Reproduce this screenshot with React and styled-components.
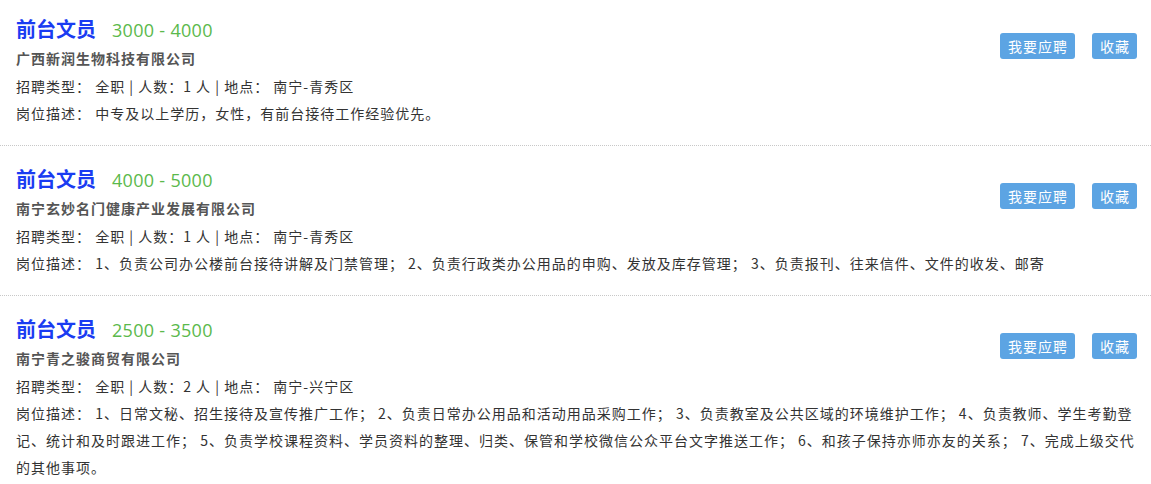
import React from 'react';
import styled, { createGlobalStyle } from 'styled-components';

const GlobalStyle = createGlobalStyle`
  body {
    margin: 0;
    background: #fff;
    font-family: "Noto Sans CJK SC", "Noto Sans", sans-serif;
    color: #333;
  }
`;

const List = styled.div`
  width: 1151px;
`;

const Job = styled.div`
  padding: 18px 14px 18px 16px;
  border-bottom: 1px dotted #c8c8c8;

  &:first-child {
    padding-top: 14px;
  }
`;

const Head = styled.div`
  display: flex;
  flex-direction: row;
  align-items: flex-start;
  justify-content: space-between;
`;

const TitleRow = styled.div`
  display: flex;
  flex-direction: row;
  align-items: baseline;
  gap: 16px;
  height: 30px;
  line-height: 30px;
`;

const Title = styled.span`
  font-size: 20px;
  font-weight: 700;
  color: #1a3cf2;
`;

const Salary = styled.span`
  font-family: "Open Sans", "Noto Sans", sans-serif;
  font-size: 18px;
  letter-spacing: 0.3px;
  color: #5bb94c;
`;

const Company = styled.div`
  font-size: 14px;
  font-weight: 700;
  letter-spacing: 1px;
  color: #555;
  line-height: 28px;
`;

const Line = styled.div`
  font-size: 14px;
  letter-spacing: 1px;
  color: #333;
  line-height: ${p => (p.$desc ? '27px' : '28px')};
`;

const Buttons = styled.div`
  display: flex;
  flex-direction: row;
  gap: 17px;
  margin-top: 19px;
`;

const Button = styled.button`
  height: 26px;
  padding: 0 7px 0 8px;
  border: none;
  border-radius: 3px;
  background: #5ca4e3;
  color: #fff;
  font-family: "Noto Sans CJK SC", sans-serif;
  font-size: 14px;
  letter-spacing: 1px;
  line-height: 26px;
  cursor: pointer;
`;

const jobs = [
  {
    title: '前台文员',
    salary: '3000 - 4000',
    company: '广西新润生物科技有限公司',
    count: 1,
    place: '南宁-青秀区',
    desc: '中专及以上学历，女性，有前台接待工作经验优先。',
  },
  {
    title: '前台文员',
    salary: '4000 - 5000',
    company: '南宁玄妙名门健康产业发展有限公司',
    count: 1,
    place: '南宁-青秀区',
    desc: '1、负责公司办公楼前台接待讲解及门禁管理； 2、负责行政类办公用品的申购、发放及库存管理； 3、负责报刊、往来信件、文件的收发、邮寄',
  },
  {
    title: '前台文员',
    salary: '2500 - 3500',
    company: '南宁青之骏商贸有限公司',
    count: 2,
    place: '南宁-兴宁区',
    desc: '1、日常文秘、招生接待及宣传推广工作； 2、负责日常办公用品和活动用品采购工作； 3、负责教室及公共区域的环境维护工作； 4、负责教师、学生考勤登记、统计和及时跟进工作； 5、负责学校课程资料、学员资料的整理、归类、保管和学校微信公众平台文字推送工作； 6、和孩子保持亦师亦友的关系； 7、完成上级交代的其他事项。',
  },
];

export default function App() {
  return (
    <>
      <GlobalStyle />
      <List>
        {jobs.map((job, i) => (
          <Job key={i}>
            <Head>
              <div>
                <TitleRow>
                  <Title>{job.title}</Title>
                  <Salary>{job.salary}</Salary>
                </TitleRow>
                <Company>{job.company}</Company>
                <Line>
                  招聘类型： 全职 | 人数：{job.count} 人 | 地点： {job.place}
                </Line>
              </div>
              <Buttons>
                <Button>我要应聘</Button>
                <Button>收藏</Button>
              </Buttons>
            </Head>
            <Line $desc>岗位描述： {job.desc}</Line>
          </Job>
        ))}
      </List>
    </>
  );
}
